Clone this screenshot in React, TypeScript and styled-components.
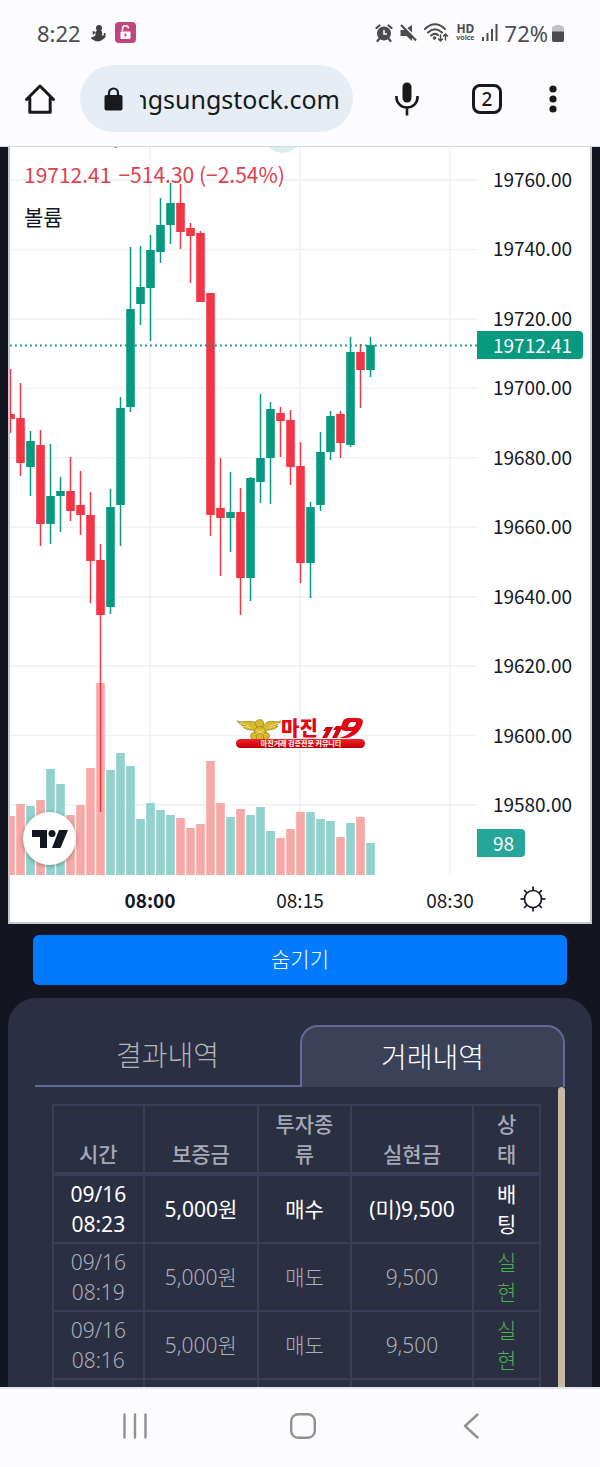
import React from "react";
import styled, { createGlobalStyle } from "styled-components";

const UI_FONT = `"Noto Sans", "Noto Sans CJK KR", sans-serif`;
const CHART_FONT = `"Noto Sans CJK KR", sans-serif`;
const UP = "#089981";
const DOWN = "#f23645";

const GlobalStyle = createGlobalStyle`
  *, *::before, *::after { box-sizing: border-box; }
  body { margin: 0; font-family: ${UI_FONT}; background: #131521; }
  button { border: 0; padding: 0; background: none; font: inherit; color: inherit; cursor: pointer; }
  svg { display: block; flex: none; }
`;

const Screen = styled.div`
  display: flex;
  flex-direction: column;
  height: 100vh;
`;

const Chrome = styled.header`
  background: #fcfcff;
  border-bottom: 1px solid #d6d8e0;
  flex: none;
`;

const StatusBar = styled.div`
  display: flex;
  align-items: center;
  justify-content: space-between;
  height: 65px;
  padding: 0 36px 0 37px;
  font-size: 22px;
  color: #4b4c50;
`;

const StatusGroup = styled.div<{ $gap: number }>`
  display: flex;
  align-items: center;
  gap: ${(p) => p.$gap}px;
`;

const Percent = styled.span`
  display: flex;
  align-items: center;
  gap: 4px;
`;

const HdVoice = styled.span`
  display: flex;
  flex-direction: column;
  align-items: center;
  font-weight: 700;
  font-size: 12px;
  line-height: 11px;
`;

const Voice = styled.small`
  font-size: 7px;
  line-height: 8px;
`;

const AddressRow = styled.div`
  display: flex;
  align-items: center;
  padding: 0 21px 14px 25px;
  color: #17191d;
`;

const AddressPill = styled.button`
  flex: 1;
  min-width: 0;
  display: flex;
  align-items: center;
  gap: 17px;
  height: 67px;
  margin: 0 14px 0 25px;
  padding: 0 13px 0 24px;
  border-radius: 34px;
  background: #e6edf4;
`;

const Url = styled.span`
  flex: 1;
  min-width: 0;
  display: flex;
  justify-content: flex-end;
  overflow: hidden;
  white-space: nowrap;
  font-size: 25px;
  line-height: 40px;
`;

const IconButton = styled.button<{ $width?: number }>`
  display: flex;
  justify-content: center;
  align-items: center;
  width: ${(p) => (p.$width ? `${p.$width}px` : "auto")};
`;

const TabCount = styled.span`
  display: flex;
  align-items: center;
  justify-content: center;
  width: 30px;
  height: 30px;
  border: 3px solid #17191d;
  border-radius: 8px;
  font-size: 19px;
  font-weight: 500;
  line-height: 24px;
`;

const Viewport = styled.main`
  flex: 1;
  min-height: 0;
  overflow: hidden;
  display: flex;
  flex-direction: column;
  padding: 0 8px;
  background: #131521;
`;

const ChartCard = styled.section`
  position: relative;
  flex: none;
  border: solid #c6c8cf;
  border-width: 0 2px 2px;
  background: #fff;
  color: #131722;
  font-family: ${CHART_FONT};
`;

const ChartBody = styled.div`
  display: flex;
`;

const Plot = styled.svg`
  flex: 1;
  min-width: 0;
  height: 728px;
`;

const PriceAxis = styled.div`
  position: relative;
  width: 113px;
  padding: 17px 18px 0 0;
`;

const PriceList = styled.ol`
  display: flex;
  flex-direction: column;
  justify-content: space-between;
  height: 655px;
  margin: 0;
  padding: 0;
  list-style: none;
  text-align: right;
  font-size: 19px;
  line-height: 30px;
`;

const AxisTag = styled.span<{ $top: number; $color: string }>`
  position: absolute;
  left: 0;
  top: ${(p) => p.$top}px;
  padding: 0 11px 0 16px;
  border-radius: 0 4px 4px 0;
  background: ${(p) => p.$color};
  color: #fff;
  font-size: 19px;
  line-height: 28px;
`;

const TimeAxis = styled.div`
  display: flex;
  align-items: center;
  justify-content: space-between;
  height: 47px;
  padding: 0 44px 0 90px;
`;

const TimeLabels = styled.div`
  display: flex;
  gap: 50px;
`;

const TimeLabel = styled.span<{ $bold?: boolean }>`
  width: 100px;
  text-align: center;
  font-size: 19px;
  line-height: 24px;
  padding-top: 3px;
  font-weight: ${(p) => (p.$bold ? 700 : 400)};
`;

const Legend = styled.div`
  position: absolute;
  left: 14px;
  top: 12px;
  font-size: 21px;
  line-height: 30px;
`;

const LegendPrice = styled.div`
  display: flex;
  gap: 7px;
  margin-bottom: 12px;
  color: #e0404e;
`;

const TradingViewBadge = styled.a`
  position: absolute;
  left: 13px;
  bottom: 57px;
  display: flex;
  align-items: center;
  justify-content: center;
  width: 53px;
  height: 53px;
  border-radius: 50%;
  background: #fff;
  box-shadow: 0 1px 4px rgba(0, 0, 0, 0.35);
`;

const Watermark = styled.div`
  position: absolute;
  left: 225px;
  top: 568px;
`;

const HideButton = styled.button`
  flex: none;
  height: 50px;
  margin: 11px 25px 13px;
  padding-bottom: 4px;
  border-radius: 6px;
  background: #007bff;
  color: #fff;
  font-size: 21px;
  font-weight: 300;
`;

const Panel = styled.section`
  flex: 1 0 auto;
  padding: 27px 27px 0;
  border-radius: 28px 28px 0 0;
  background: #2b2f42;
`;

const Tabs = styled.div`
  display: flex;
`;

const Tab = styled.button<{ $active?: boolean }>`
  flex: 1;
  height: 62px;
  padding: ${(p) => (p.$active ? "0" : "0 2px")};
  font-size: 28px;
  font-weight: 300;
  line-height: 40px;
  color: ${(p) => (p.$active ? "#fff" : "#b3b4b8")};
  background: ${(p) => (p.$active ? "#3b4159" : "transparent")};
  border: solid #616b97;
  border-width: ${(p) => (p.$active ? "2px 2px 0" : "0 0 2px")};
  border-radius: ${(p) => (p.$active ? "18px 18px 0 0" : "0")};
`;

const ScrollArea = styled.div`
  display: flex;
  padding-left: 17px;
`;

const ScrollThumb = styled.div`
  width: 7px;
  margin-left: 17px;
  border-radius: 4px 4px 0 0;
  background: #c8b9a3;
`;

const TradeTable = styled.table`
  flex: 1;
  table-layout: fixed;
  border-collapse: collapse;
  margin-top: 17px;
  font-size: 21px;
  line-height: 30px;
  text-align: center;
`;

const Col = styled.col<{ $share: number }>`
  width: ${(p) => (p.$share / 489) * 100}%;
`;

const HeadCell = styled.th`
  padding: 3px 16px;
  border: 2px solid #3a3f57;
  border-bottom-width: 4px;
  font-weight: 500;
  vertical-align: bottom;
  color: #a6a9b5;
`;

const Row = styled.tr<{ $open?: boolean }>`
  height: 68px;
  color: ${(p) => (p.$open ? "#fff" : "#abaeba")};
  font-weight: ${(p) => (p.$open ? 400 : 300)};
`;

const Cell = styled.td<{ $done?: boolean }>`
  padding: 3px 16px;
  border: 2px solid #3a3f57;
  ${(p) => p.$done && "color: #4caf50;"}
`;

const Stamp = styled.time`
  display: flex;
  flex-direction: column;
  align-items: center;
  white-space: nowrap;
`;

const NavBar = styled.nav`
  flex: none;
  display: flex;
  height: 80px;
  padding: 0 45px 4px 51px;
  border-top: 2px solid #e4e6f0;
  background: #fcfcff;
  color: #8f9094;
`;

const NavButton = styled.button`
  flex: 1;
  display: flex;
  align-items: center;
  justify-content: center;
`;

type Candle = [up: 0 | 1, high: number, top: number, bottom: number, low: number, volume: number];

// Vertical positions in chart space; each candle is ten units wide.
const candles: Candle[] = [
  [0, 369, 414, 419, 433, 816], [0, 383, 418, 463, 476, 804], [1, 431, 441, 467, 496, 806],
  [0, 430, 445, 524, 546, 800], [1, 444, 496, 524, 544, 769], [1, 477, 491, 496, 532, 784],
  [0, 457, 491, 511, 521, 815], [0, 471, 505, 515, 535, 805], [0, 492, 515, 561, 603, 768],
  [0, 544, 560, 615, 812, 683], [1, 489, 507, 607, 614, 770], [1, 397, 408, 505, 546, 753],
  [1, 247, 309, 407, 412, 766], [1, 246, 287, 304, 325, 819], [1, 235, 250, 288, 341, 803],
  [1, 198, 225, 252, 263, 810], [1, 183, 203, 225, 244, 815], [0, 184, 203, 232, 249, 818],
  [0, 223, 228, 236, 283, 828], [0, 231, 233, 302, 302, 824], [0, 293, 293, 515, 536, 761],
  [0, 458, 508, 518, 576, 803], [1, 472, 512, 518, 552, 817], [0, 488, 512, 578, 615, 809],
  [1, 477, 478, 578, 601, 815], [1, 394, 458, 482, 503, 807], [1, 402, 409, 458, 504, 831],
  [0, 407, 413, 421, 457, 838], [0, 410, 420, 467, 485, 829], [0, 442, 466, 563, 583, 812],
  [1, 502, 507, 563, 598, 812], [1, 432, 452, 505, 511, 819], [1, 411, 416, 452, 460, 821],
  [0, 411, 414, 443, 458, 837], [1, 337, 352, 445, 447, 823], [0, 344, 352, 370, 408, 817],
  [1, 337, 345, 370, 377, 843],
];

const prices = Array.from({ length: 10 }, (_, i) => 19760 - i * 20);
const SPACE_TOP = 147;
const gridY = (i: number) => 33 + (i * 625) / 9;

const columns = [
  { title: "시간", share: 91 },
  { title: "보증금", share: 115 },
  { title: "투자종류", share: 93 },
  { title: "실현금", share: 123 },
  { title: "상태", share: 67 },
];

const trades = [
  { date: "09/16", time: "08:23", amount: "5,000원", kind: "매수", result: "(미)9,500", state: "배팅", open: true },
  { date: "09/16", time: "08:19", amount: "5,000원", kind: "매도", result: "9,500", state: "실현", open: false },
  { date: "09/16", time: "08:16", amount: "5,000원", kind: "매도", result: "9,500", state: "실현", open: false },
];

function CandlePlot() {
  return (
    <Plot role="img" aria-label="캔들 차트">
      {prices.map((p, i) => (
        <line key={p} x1="0" x2="100%" y1={gridY(i)} y2={gridY(i)} stroke="#f0f1f3" strokeWidth="1.5" />
      ))}
      {[140, 290, 440].map((x) => (
        <line key={x} x1={x} x2={x} y1="0" y2="728" stroke="#f0f1f3" strokeWidth="1.5" />
      ))}
      <circle cx="272.5" cy="-13" r="19" fill="#d8efeb" />
      <path d="M104.500 0h2" stroke="#131722" strokeWidth="1.200" />
      {candles.map(([up, high, top, bottom, low, volume], i) => {
        const x = i * 10 + 0.5;
        const color = up ? UP : DOWN;
        return (
          <g key={i} transform={`translate(${x} ${-SPACE_TOP})`}>
            <rect x="-4.3" y={volume} width="8.6" height={875 - volume} fill={up ? "#92d2cc" : "#f7a9a7"} />
            <rect x="-0.75" y={high} width="1.5" height={low - high} fill={color} />
            <rect x="-4.3" y={top} width="8.6" height={bottom - top} fill={color} />
          </g>
        );
      })}
      <line x1="0" x2="100%" y1="198.5" y2="198.5" stroke={UP} strokeWidth="1.8" strokeDasharray="1.8 3.2" />
    </Plot>
  );
}

function Gear() {
  return (
    <svg width="26" height="26" viewBox="0 0 26 26" fill="none" stroke="#131722" strokeWidth="1.7">
      <circle cx="13" cy="13" r="8.5" />
      {[0, 45, 90, 135, 180, 225, 270, 315].map((a) => (
        <path key={a} d="M13 4.5V0.5" transform={`rotate(${a} 13 13)`} />
      ))}
    </svg>
  );
}

function MarginLogo() {
  return (
    <svg width="132" height="36" viewBox="0 0 132 36" role="img" aria-label="마진119">
      <defs>
        <linearGradient id="bar" x1="0" y1="0" x2="0" y2="1">
          <stop offset="0" stopColor="#f0252b" />
          <stop offset="0.6" stopColor="#dc0a12" />
          <stop offset="1" stopColor="#b00008" />
        </linearGradient>
      </defs>
      <g fill="#d9b92c" stroke="#8f7a1c" strokeWidth="0.6">
        <path d="M2 6C9 8 14 5 20 7l3 3 3-5 3 5 3-3c5-2 9 1 14-1-2 3-4 4-7 5l4 0c-2 3-6 4-10 4-2 1-3 2-3 3H20c0-2-2-3-4-3-4 0-8-2-9-5l4 1C7 10 4 9 2 6Z" />
        <path d="M20 8c1-4 8-5 9 0l-2 5h-5Z" />
        <circle cx="25" cy="17" r="5.5" />
        <circle cx="19" cy="21" r="3.5" /><circle cx="31" cy="21" r="3.5" />
        <circle cx="25" cy="22" r="3.5" />
      </g>
      <path d="M5 8l9 3M8 11l8 2M44 8l-9 3M41 11l-7 2M21 15l8 4M29 15l-8 4" stroke="#f5e27a" strokeWidth="0.8" />
      <text x="46" y="21" fontFamily="Noto Sans CJK KR" fontWeight="900" fontSize="20" fill="#e30613">마진</text>
      <path d="M91 12h7l-6 11h-5l4-7h-3ZM101 11h7l-6 12h-5l4-8h-3Z" fill="#d00812" />
      <path fillRule="evenodd" d="M114 3h8c6 0 7 3 5 7-3 7-7 11-15 13h-8c7-2 10-4 13-7h-6c-5 0-6-3-4-7 1-4 3-6 7-6Zm2 4c-2 1-3 3-3 5h5c2-1 3-3 3-5Z" fill="#e30613" />
      <rect x="1" y="24" width="129" height="9" rx="4.5" fill="url(#bar)" />
      <text x="66" y="31" textAnchor="middle" fontFamily="Noto Sans CJK KR" fontWeight="700" fontSize="7" fill="#fff">마진거래 검증전문 커뮤니티</text>
    </svg>
  );
}

export default function App() {
  return (
    <Screen>
      <GlobalStyle />
      <Chrome>
        <StatusBar>
          <StatusGroup $gap={9}>
            <span>8:22</span>
            <svg width="16" height="20" viewBox="0 0 16 20" fill="#3f4044">
              <circle cx="9" cy="5" r="3" />
              <path d="M7 7h4c1.500 2 1.500 4 1 6 1.500 0 2-1 2-3h1.500c.5 4-1 6-3 6.500-2 2.500-7 2.500-9 .5-2-.5-2.500-2-2-3 2 0 3-.5 4-2C5 10 6 9 7 7Z" />
              <path d="M2.500 8l3.500 1-3 3Z" />
            </svg>
            <svg width="21" height="21" viewBox="0 0 21 21">
              <rect width="21" height="21" rx="4" fill="#c2467d" />
              <rect x="5.500" y="9.500" width="10" height="7.500" rx="1" fill="#fff" />
              <path d="M7.500 9V7a3 3 0 0 1 6-.5" fill="none" stroke="#fff" strokeWidth="1.500" />
              <path d="M10.500 11.500v3" stroke="#c2467d" strokeWidth="1.800" />
            </svg>
          </StatusGroup>
          <StatusGroup $gap={7}>
            <svg width="18" height="18" viewBox="0 0 18 18">
              <circle cx="9" cy="9.500" r="7" fill="#4b4c50" />
              <path d="M1.500 4l3-2.500M16.500 4l-3-2.500M4 15l-1.500 2M14 15l1.500 2" stroke="#4b4c50" strokeWidth="2.200" strokeLinecap="round" />
              <path d="M9 6v4h3" stroke="#fcfcff" strokeWidth="1.600" fill="none" />
            </svg>
            <svg width="17" height="18" viewBox="0 0 17 18" fill="#4b4c50">
              <path d="M0.500 6h4l7.500-5v16L6.500 12h-6Z" />
              <path d="M1.500 -0.500l16 16" stroke="#fcfcff" strokeWidth="2" />
              <path d="M1 1l15 15.500" stroke="#4b4c50" strokeWidth="2.200" />
            </svg>
            <svg width="25" height="19" viewBox="0 0 25 19" fill="none" stroke="#4b4c50" strokeWidth="2" strokeLinecap="round">
              <path d="M1 6Q11-3.500 21 6M4 9.500Q11 3 18 9.500M7 12.500Q11 9.500 14 12" />
              <circle cx="10.500" cy="15" r="0.800" fill="#4b4c50" />
              <path d="M16.500 12v6M14.500 16l2 2 2-2M21.500 17v-6M19.500 13l2-2 2 2" strokeWidth="1.500" />
            </svg>
            <HdVoice>HD<Voice>voice</Voice></HdVoice>
            <svg width="16" height="18" viewBox="0 0 16 18" fill="#4b4c50">
              <rect x="0" y="13" width="2" height="4" /><rect x="4.500" y="9" width="2" height="8" />
              <rect x="9" y="5" width="2" height="12" /><rect x="13.500" y="0" width="2" height="17" />
            </svg>
            <Percent>
              72%
              <svg width="12" height="18" viewBox="0 0 12 18">
                <path d="M3 2q0-1 1-1h4q1 0 1 1h1q2 0 2 2v12q0 2-2 2H2q-2 0-2-2V4q0-2 2-2Z" fill="#c2c3c6" />
                <path d="M0 7.500h12V16q0 2-2 2H2q-2 0-2-2Z" fill="#4b4c50" />
              </svg>
            </Percent>
          </StatusGroup>
        </StatusBar>
        <AddressRow>
          <IconButton aria-label="홈">
            <svg width="30" height="30" viewBox="0 0 30 30" fill="none" stroke="#17191d" strokeWidth="3" strokeLinejoin="round" strokeLinecap="round">
              <path d="M1.500 15.500L15 2l13.500 13.500M4.800 14v14.300h20.400V14" />
            </svg>
          </IconButton>
          <AddressPill>
            <svg width="19" height="24" viewBox="0 0 19 24">
              <rect x="0.500" y="8" width="18" height="15.500" rx="2" fill="#17191d" />
              <path d="M5 9V6a4.500 4.500 0 0 1 9 0v3" fill="none" stroke="#17191d" strokeWidth="2.200" />
            </svg>
            <Url>ngsungstock.com</Url>
          </AddressPill>
          <IconButton $width={80} aria-label="음성 검색">
            <svg width="24" height="34" viewBox="0 0 24 34" fill="none" stroke="#17191d" strokeWidth="2.600">
              <rect x="7.500" y="0.500" width="9" height="20" rx="4.500" fill="#17191d" stroke="none" />
              <path d="M1.500 14v1.500a10.500 10 0 0 0 21 0V14M12 26v7.500" />
            </svg>
          </IconButton>
          <IconButton $width={80} aria-label="탭"><TabCount>2</TabCount></IconButton>
          <IconButton $width={52} aria-label="메뉴">
            <svg width="8" height="28" viewBox="0 0 8 28" fill="#17191d">
              <circle cx="4" cy="4" r="3.600" /><circle cx="4" cy="14" r="3.600" /><circle cx="4" cy="24" r="3.600" />
            </svg>
          </IconButton>
        </AddressRow>
      </Chrome>

      <Viewport>
        <ChartCard>
          <ChartBody>
            <CandlePlot />
            <PriceAxis>
              <PriceList>
                {prices.map((p) => <li key={p}>{p.toFixed(2)}</li>)}
              </PriceList>
              <AxisTag $top={184} $color={UP}>19712.41</AxisTag>
              <AxisTag $top={682} $color="#26a69a">98</AxisTag>
            </PriceAxis>
          </ChartBody>
          <TimeAxis>
            <TimeLabels>
              <TimeLabel $bold>08:00</TimeLabel>
              <TimeLabel>08:15</TimeLabel>
              <TimeLabel>08:30</TimeLabel>
            </TimeLabels>
            <IconButton aria-label="설정"><Gear /></IconButton>
          </TimeAxis>
          <Legend>
            <LegendPrice><span>19712.41</span><span>−514.30 (−2.54%)</span></LegendPrice>
            볼륨
          </Legend>
          <Watermark><MarginLogo /></Watermark>
          <TradingViewBadge href="#" aria-label="TradingView">
            <svg width="36" height="18" viewBox="0 0 36 18" fill="#131722">
              <path d="M0 0h15v18H8V7H0ZM27 0h9l-7.500 18H20Z" />
              <circle cx="20" cy="3.500" r="3.500" />
            </svg>
          </TradingViewBadge>
        </ChartCard>

        <HideButton>숨기기</HideButton>

        <Panel>
          <Tabs role="tablist">
            <Tab role="tab" aria-selected={false}>결과내역</Tab>
            <Tab role="tab" aria-selected $active>거래내역</Tab>
          </Tabs>
          <ScrollArea>
            <TradeTable>
              <colgroup>
                {columns.map((c) => <Col key={c.title} $share={c.share} />)}
              </colgroup>
              <thead>
                <tr>
                  {columns.map((c) => <HeadCell key={c.title} scope="col">{c.title}</HeadCell>)}
                </tr>
              </thead>
              <tbody>
                {trades.map((t) => (
                  <Row key={t.time} $open={t.open}>
                    <Cell><Stamp><span>{t.date}</span><span>{t.time}</span></Stamp></Cell>
                    <Cell>{t.amount}</Cell>
                    <Cell>{t.kind}</Cell>
                    <Cell>{t.result}</Cell>
                    <Cell $done={!t.open}>{t.state}</Cell>
                  </Row>
                ))}
                <Row>
                  {columns.map((c) => <Cell key={c.title} />)}
                </Row>
              </tbody>
            </TradeTable>
            <ScrollThumb />
          </ScrollArea>
        </Panel>
      </Viewport>

      <NavBar>
        <NavButton aria-label="최근 앱">
          <svg width="26" height="26" viewBox="0 0 26 26" stroke="currentColor" strokeWidth="2.400" strokeLinecap="round">
            <path d="M2.500 1.500v23M13 1.500v23M23.500 1.500v23" />
          </svg>
        </NavButton>
        <NavButton aria-label="홈 화면">
          <svg width="26" height="26" viewBox="0 0 26 26" fill="none" stroke="currentColor" strokeWidth="2.400">
            <rect x="1.200" y="1.200" width="23.600" height="23.600" rx="7" />
          </svg>
        </NavButton>
        <NavButton aria-label="뒤로">
          <svg width="16" height="26" viewBox="0 0 16 26" fill="none" stroke="currentColor" strokeWidth="2.400" strokeLinecap="round" strokeLinejoin="round">
            <path d="M14.500 1.500L2 13l12.500 11.500" />
          </svg>
        </NavButton>
      </NavBar>
    </Screen>
  );
}
